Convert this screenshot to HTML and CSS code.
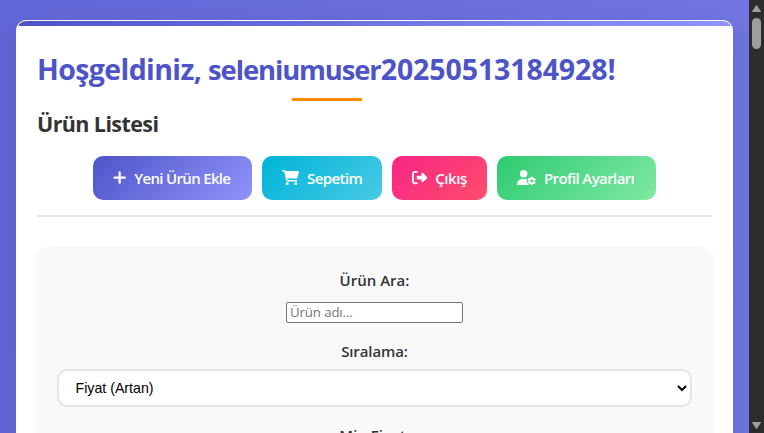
FILE: index.html
```html
<!DOCTYPE html>
<html lang="tr">
<head>
<meta charset="utf-8">
<title>Ürün Listesi</title>
<link rel="stylesheet" href="styles.css">
</head>
<body>
<div class="viewport">
  <main class="container">
    <h1 class="welcome">Hoşgeldiniz, <span class="user-name">seleniumuser</span><span class="user-number">20250513184928!</span></h1>
    <h2 class="list-title">Ürün Listesi</h2>
    <nav class="actions">
      <a class="btn btn-add"><svg class="icon icon-plus" viewBox="0 0 448 512"><path d="M256 80c0-17.700-14.300-32-32-32s-32 14.300-32 32v144H48c-17.700 0-32 14.300-32 32s14.300 32 32 32h144v144c0 17.700 14.300 32 32 32s32-14.300 32-32V288h144c17.700 0 32-14.300 32-32s-14.300-32-32-32H256z"/></svg><span>Yeni Ürün Ekle</span></a>
      <a class="btn btn-cart"><svg class="icon icon-cart" viewBox="0 0 576 512"><path d="M0 24C0 10.700 10.700 0 24 0L69.500 0c22 0 41.500 12.800 50.600 32l411 0c26.300 0 45.500 25 38.600 50.400l-41 152.300c-8.500 31.400-37 53.300-69.500 53.300l-288.500 0 5.400 28.500c2.200 11.300 12.100 19.500 23.600 19.500L488 336c13.300 0 24 10.700 24 24s-10.700 24-24 24l-288.300 0c-34.600 0-64.300-24.600-70.700-58.500L77.400 54.500c-.7-3.800-4-6.500-7.900-6.500L24 48C10.700 48 0 37.300 0 24zM128 464a48 48 0 1 1 96 0 48 48 0 1 1-96 0zm336-48a48 48 0 1 1 0 96 48 48 0 1 1 0-96z"/></svg><span>Sepetim</span></a>
      <a class="btn btn-exit"><svg class="icon icon-exit" viewBox="0 0 512 512"><path d="M377.900 105.900L500.700 228.700c7.200 7.200 11.300 17.100 11.300 27.300s-4.100 20.100-11.300 27.300L377.900 406.100c-6.400 6.400-15 9.900-24 9.900c-18.700 0-33.900-15.200-33.900-33.900l0-62.100-128 0c-17.700 0-32-14.300-32-32l0-64c0-17.700 14.300-32 32-32l128 0 0-62.100c0-18.700 15.200-33.900 33.900-33.900c9 0 17.600 3.600 24 9.900zM160 96L96 96c-17.700 0-32 14.300-32 32l0 256c0 17.700 14.300 32 32 32l64 0c17.700 0 32 14.300 32 32s-14.300 32-32 32l-64 0c-53 0-96-43-96-96L0 128C0 75 43 32 96 32l64 0c17.700 0 32 14.300 32 32s-14.300 32-32 32z"/></svg><span>Çıkış</span></a>
      <a class="btn btn-profile"><svg class="icon icon-profile" viewBox="0 0 640 512">
        <defs><mask id="gear-gap"><rect width="640" height="512" fill="#fff"/><circle cx="496" cy="368" r="164" fill="#000"/></mask></defs>
        <path mask="url(#gear-gap)" d="M224 256A128 128 0 1 0 224 0a128 128 0 1 0 0 256zM178 304C80 304 0 384 0 482c0 17 13 30 30 30h420V304z"/>
        <circle class="gear-ring" cx="496" cy="368" r="80"/>
        <path class="gear-teeth" d="M496 266v-38M496 470v38M408 317l-33-19M584 419l33 19M408 419l-33 19M584 317l33-19"/>
      </svg><span>Profil Ayarları</span></a>
    </nav>
    <form class="filters">
      <label class="label" for="search">Ürün Ara:</label>
      <input class="search" id="search" type="text" placeholder="Ürün adı...">
      <label class="label label-sort" for="sort">Sıralama:</label>
      <select class="sort" id="sort"><option>Fiyat (Artan)</option></select>
      <label class="label label-min">Min Fiyat:</label>
    </form>
  </main>
</div>
<div class="scrollbar">
  <svg class="arrow" viewBox="0 0 9 7"><path d="M4.500 0.500L8.500 6.500H0.500z"/></svg>
  <div class="thumb"></div>
  <svg class="arrow arrow-down" viewBox="0 0 9 7"><path d="M4.500 6.500L8.500 0.500H0.500z"/></svg>
</div>
</body>
</html>
```
FILE: styles.css
```css
* { box-sizing: border-box; }
body {
  margin: 0;
  height: 433px;
  display: flex;
  overflow: hidden;
  font-family: "Open Sans", "Noto Sans", sans-serif;
  color: #333;
}
.viewport {
  width: 749px;
  height: 433px;
  padding: 20px 16px 0;
  overflow: hidden;
  background: linear-gradient(100deg, #6267d8, #7277e2);
}
.container {
  position: relative;
  height: 900px;
  padding: 29px 20px 0;
  border: 1px solid #fff;
  border-radius: 10px;
  background: #fff;
  overflow: hidden;
  box-shadow: 0 10px 30px rgba(0, 0, 0, .12);
}
.container::before {
  content: "";
  position: absolute;
  inset: 0 0 auto;
  height: 5px;
  background: linear-gradient(90deg, #4e54c8, #8f94fb);
}
.welcome {
  position: relative;
  width: 580px;
  height: 51px;
  margin: 0;
  font-size: 28.5px;
  line-height: 38px;
  font-weight: 700;
  letter-spacing: -.6px;
  white-space: nowrap;
  color: #4e54c8;
}
.user-name { font-size: 27.4px; letter-spacing: -1.1px; }
.user-number { letter-spacing: -.1px; }
.welcome::after {
  content: "";
  position: absolute;
  left: 255px;
  bottom: 0;
  width: 70px;
  height: 3px;
  background: #ff8c00;
}
.list-title {
  margin: 7px 0 17px;
  font-size: 21.5px;
  line-height: 31px;
  letter-spacing: -.6px;
}
.actions {
  display: flex;
  justify-content: center;
  gap: 10px;
  padding-bottom: 15px;
  border-bottom: 2px solid #e6e6e6;
}
.btn {
  display: flex;
  align-items: center;
  gap: 8px;
  height: 44px;
  padding: 0 0 0 20px;
  border-radius: 10px;
  color: #fff;
  font-size: 15px;
  font-weight: 650;
  letter-spacing: -.6px;
  white-space: nowrap;
}
.btn-add { width: 159px; background: linear-gradient(135deg, #4e54c8, #8f94fb); letter-spacing: -.68px; }
.btn-cart { width: 120px; background: linear-gradient(135deg, #00b4d8, #48cae4); }
.btn-exit { width: 95px; background: linear-gradient(135deg, #f72585, #ff4d6d); letter-spacing: -.4px; }
.btn-profile { width: 159px; background: linear-gradient(135deg, #2ecc71, #80e8a3); }
.icon { height: 15.2px; margin-top: -1px; fill: #fff; flex: none; }
.icon-plus { width: 13.3px; stroke: #fff; stroke-width: 14; }
.icon-cart { width: 17.1px; }
.icon-exit { width: 15.2px; }
.icon-profile { width: 19px; }
.gear-ring { fill: none; stroke: #fff; stroke-width: 64; }
.gear-teeth { fill: none; stroke: #fff; stroke-width: 64; }
.filters {
  display: flex;
  flex-direction: column;
  align-items: center;
  height: 500px;
  margin-top: 30px;
  padding: 20px;
  border-radius: 12px;
  background: #f9f9f9;
  box-shadow: 0 2px 6px rgba(0, 0, 0, .05);
}
.label {
  height: 27px;
  font-size: 15px;
  line-height: 27px;
  font-weight: 600;
}
.search {
  width: 177px;
  height: 21px;
  margin: 8px 0 15px;
  padding: 0 2px 1px 3px;
  border: 1px solid #767676;
  border-radius: 2px;
  font: 13.3px "Open Sans", sans-serif;
  letter-spacing: -.15px;
}
.search::placeholder { color: #757575; }
.label-sort { letter-spacing: -.1px; }
.sort {
  width: 100%;
  height: 38px;
  margin: 4px 0 15px;
  padding: 0 0 0 12.5px;
  border: 2px solid #e6e6e6;
  border-radius: 10px;
  background-color: #fff;
  color: #000;
  font: 14.2px "Liberation Sans", Arial, sans-serif;
}
.scrollbar {
  display: flex;
  flex-direction: column;
  align-items: center;
  width: 15px;
  height: 433px;
  padding: 5px 0 4px;
  background: #2c2c2c;
}
.arrow { width: 9px; height: 7px; fill: #9f9f9f; stroke: #9f9f9f; stroke-linejoin: round; }
.thumb { width: 9px; height: 31px; margin-top: 6px; border-radius: 5px; background: #9f9f9f; }
.arrow-down { margin-top: auto; }
```
